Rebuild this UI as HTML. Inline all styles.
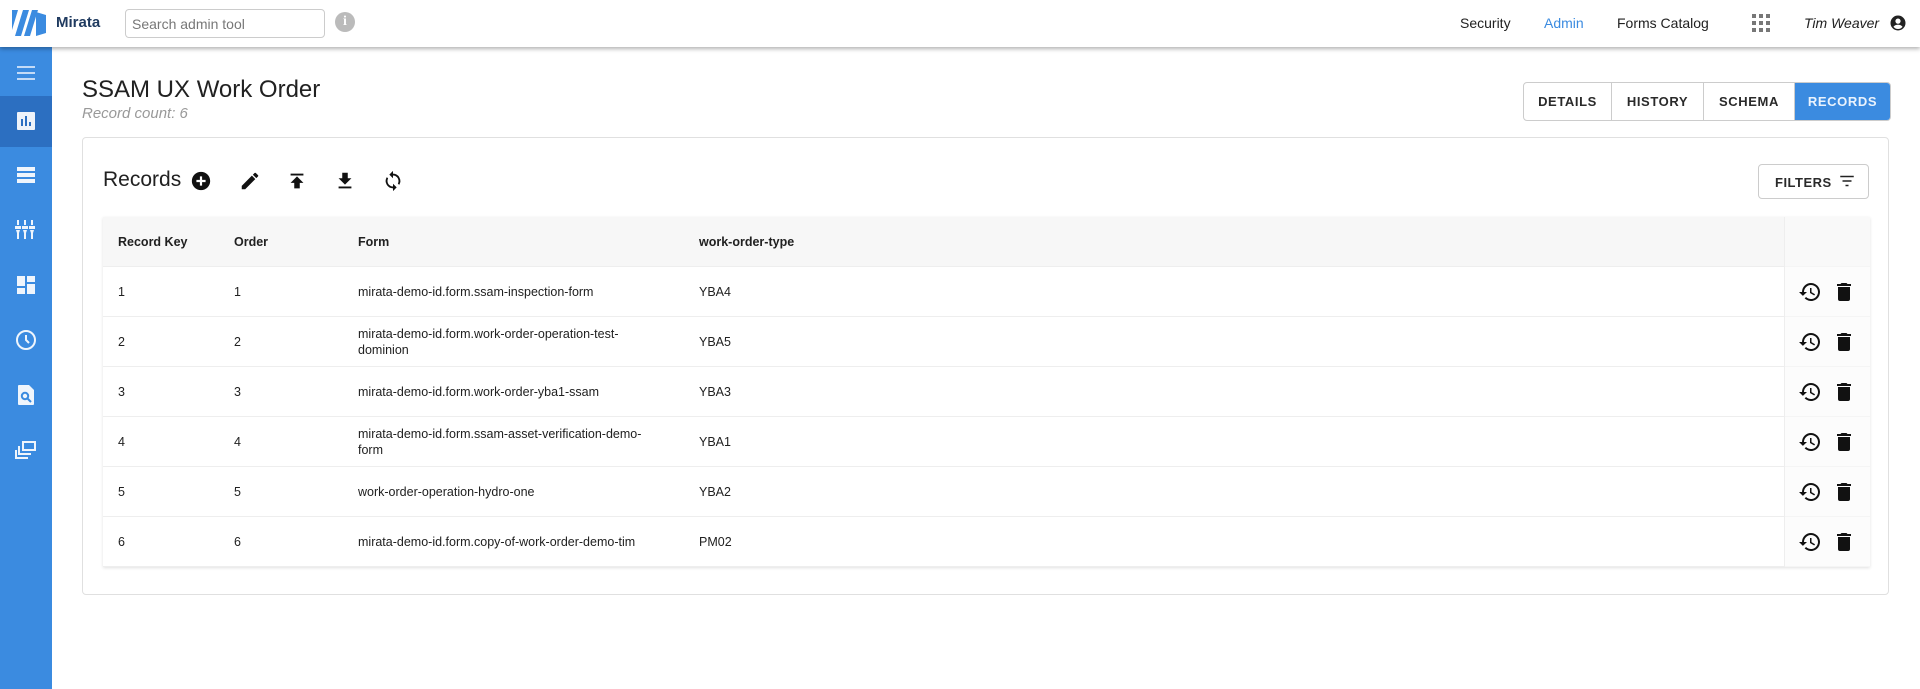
<!DOCTYPE html>
<html><head><meta charset="utf-8"><style>
*{box-sizing:border-box;margin:0;padding:0}
body{width:1920px;height:689px;overflow:hidden;background:#fff;font-family:"Liberation Sans",Arial,sans-serif;color:#212121;position:relative}
.hdr{position:absolute;left:0;top:0;width:1920px;height:47px;background:#fff;box-shadow:0 2px 4px rgba(0,0,0,.3);z-index:2}
.side{position:absolute;left:0;top:47px;width:52px;height:642px;background:#3b8be0}
.side .ic{position:absolute;left:14px;width:24px;height:24px;opacity:.92}
.abs{position:absolute}
.nav{position:absolute;top:15px;font-size:14px}
.tabs{position:absolute;left:1523px;top:82px;height:39px;display:flex;border:1px solid #ccc;border-radius:4px;overflow:hidden}
.tabs div{font-size:13px;font-weight:bold;letter-spacing:.6px;display:flex;align-items:center;justify-content:center;border-right:1px solid #ccc;color:#2a2a2a}
.card{position:absolute;left:82px;top:137px;width:1807px;height:458px;border:1px solid #e0e0e0;border-radius:4px}
.tbl{position:absolute;left:103px;top:217px;width:1767px;height:350px;box-shadow:0 1px 3px rgba(0,0,0,.12)}
.row{position:absolute;left:0;width:1767px;height:50px;border-bottom:1px solid #eee;font-size:12.5px}
.row span{position:absolute;top:50%;transform:translateY(-50%);line-height:16px}
.th{background:#f7f7f7;font-weight:bold;font-size:12.5px}
.act{position:absolute;left:1681px;top:0;width:86px;height:350px;border-left:1px solid #eee;background:rgba(250,250,250,.6)}
</style></head><body>
<div class="hdr">
<svg class="abs" style="left:10px;top:10px" width="42" height="26" viewBox="0 0 42 26"><path d="M0 0h8L2 20V0z M5 26 13 0h6l-8 26z M14 26 22 0h6l-8 26z M26 26V2l10 3v18z" fill="#3b8be0"/></svg>
<div class="abs" style="left:56px;top:14px;font-size:15px;font-weight:bold;color:#1f3a5f">Mirata</div>
<div class="abs" style="left:125px;top:9px;width:200px;height:29px;border:1px solid #ccc;border-radius:4px;font-size:14px;color:#777;padding:6px 6px">Search admin tool</div>
<div class="abs" style="left:335px;top:12px;width:20px;height:20px;border-radius:50%;background:#bbb;color:#fff;font-size:14px;font-weight:bold;text-align:center;line-height:20px;font-family:'Liberation Serif',serif">i</div>
<div class="nav" style="left:1460px">Security</div>
<div class="nav" style="left:1544px;color:#3b8be0">Admin</div>
<div class="nav" style="left:1617px">Forms Catalog</div>
<svg class="abs" style="left:1752px;top:14px" width="18" height="18" viewBox="0 0 18 18" fill="#777"><rect x="0" y="0" width="4" height="4"/><rect x="7" y="0" width="4" height="4"/><rect x="14" y="0" width="4" height="4"/><rect x="0" y="7" width="4" height="4"/><rect x="7" y="7" width="4" height="4"/><rect x="14" y="7" width="4" height="4"/><rect x="0" y="14" width="4" height="4"/><rect x="7" y="14" width="4" height="4"/><rect x="14" y="14" width="4" height="4"/></svg>
<div class="nav" style="left:1804px;font-style:italic">Tim Weaver</div>
<svg class="abs" style="left:1889px;top:14px" width="18" height="18" viewBox="0 0 24 24"><path fill="#222" d="M12 2a10 10 0 100 20 10 10 0 000-20zm0 4a3.5 3.5 0 110 7 3.5 3.5 0 010-7zm0 14a8 8 0 01-6-2.8c.8-1.8 3.6-2.8 6-2.8s5.2 1 6 2.8A8 8 0 0112 20z"/></svg>
</div>
<div class="side">
<svg class="ic" style="top:14px" viewBox="0 0 24 24"><path d="M3 6h18M3 12h18M3 18h18" stroke="#cfe2fa" stroke-width="2"/></svg>
<div class="abs" style="left:0;top:49px;width:52px;height:51px;background:#2c6fc1"></div>
<svg class="ic" style="top:62px" viewBox="0 0 24 24"><path fill="#fff" d="M4 3h16a1 1 0 011 1v16a1 1 0 01-1 1H4a1 1 0 01-1-1V4a1 1 0 011-1zm3 7v7h2v-7zm4-3v10h2V7zm4 6v4h2v-4z"/></svg>
<svg class="ic" style="top:116px" viewBox="0 0 24 24"><path fill="#fff" d="M3 4h18v4H3zm0 6h18v4H3zm0 6h18v4H3z"/></svg>
<svg class="ic" style="top:171px" viewBox="0 0 24 24"><path fill="#fff" d="M3 2h2v5H3zm7 0h2v5h-2zm7 0h2v5h-2zM1 8h6v3H1zm7 0h6v3H8zm7 0h6v3h-6zM2 12h4l-1 3v6H3v-6zm7 0h4l-1 3v6h-2v-6zm7 0h4l-1 3v6h-2v-6z"/></svg>
<svg class="ic" style="top:226px" viewBox="0 0 24 24"><path fill="#fff" d="M3 3h8v10H3zm10 0h8v6h-8zM3 15h8v6H3zm10-4h8v10h-8z"/></svg>
<svg class="ic" style="top:281px" viewBox="0 0 24 24"><circle cx="12" cy="12" r="9" fill="none" stroke="#fff" stroke-width="2"/><path d="M12 7v5l3 3" stroke="#fff" stroke-width="2" fill="none"/></svg>
<svg class="ic" style="top:336px" viewBox="0 0 24 24"><path fill="#fff" d="M5 2h10l5 5v14a1 1 0 01-1 1H5a1 1 0 01-1-1V3a1 1 0 011-1z"/><circle cx="11" cy="13" r="3.2" fill="none" stroke="#3b8be0" stroke-width="2"/><path d="M13.5 15.5 17 19" stroke="#3b8be0" stroke-width="2"/></svg>
<svg class="ic" style="top:391px" viewBox="0 0 24 24"><path d="M9 4h12v8H9z" fill="none" stroke="#fff" stroke-width="2"/><path d="M5 8v8h12M2 12v8h12" fill="none" stroke="#fff" stroke-width="2"/></svg>
</div>
<div class="abs" style="left:82px;top:76px;font-size:24px">SSAM UX Work Order</div>
<div class="abs" style="left:82px;top:105px;font-size:15px;font-style:italic;color:#999">Record count: 6</div>
<div class="tabs"><div style="width:88px">DETAILS</div><div style="width:92px">HISTORY</div><div style="width:91px">SCHEMA</div><div style="width:95px;background:#3b8be0;color:#eaf3fd;border:none">RECORDS</div></div>
<div class="card"></div>
<div class="abs" style="left:103px;top:168px;font-size:21px">Records</div>
<svg class="abs" style="left:190px;top:170px" width="22" height="22" viewBox="0 0 24 24"><circle cx="12" cy="12" r="10" fill="#111"/><path d="M12 7v10M7 12h10" stroke="#fff" stroke-width="2.4"/></svg>
<svg class="abs" style="left:239px;top:170px" width="22" height="22" viewBox="0 0 24 24"><path fill="#111" d="M3 17.25V21h3.75L17.8 9.94l-3.75-3.75zM20.7 7.04a1 1 0 000-1.41l-2.34-2.34a1 1 0 00-1.41 0l-1.83 1.83 3.75 3.75z"/></svg>
<svg class="abs" style="left:286px;top:170px" width="22" height="22" viewBox="0 0 24 24"><path fill="#111" d="M5 4h14v2H5zm0 10h4v6h6v-6h4l-7-7z"/></svg>
<svg class="abs" style="left:334px;top:170px" width="22" height="22" viewBox="0 0 24 24"><path fill="#111" d="M19 9h-4V3H9v6H5l7 7zM5 18v2h14v-2z"/></svg>
<svg class="abs" style="left:382px;top:170px" width="22" height="22" viewBox="0 0 24 24"><path fill="#111" d="M12 4V1L8 5l4 4V6c3.3 0 6 2.7 6 6 0 1-.25 2-.7 2.8l1.46 1.46A8 8 0 0012 4zm0 14c-3.3 0-6-2.7-6-6 0-1 .25-2 .7-2.8L5.24 7.74A8 8 0 0012 20v3l4-4-4-4z"/></svg>
<div class="abs" style="left:1758px;top:164px;width:111px;height:35px;border:1px solid #ccc;border-radius:4px;font-size:13px;font-weight:bold;padding:10px 0 0 16px;letter-spacing:.5px;color:#2a2a2a">FILTERS</div>
<svg class="abs" style="left:1838px;top:172px" width="18" height="18" viewBox="0 0 24 24"><path d="M3 6h18M6 12h12M10 18h4" stroke="#222" stroke-width="2"/></svg>
<div class="tbl">
<div class="row th" style="top:0"><span style="left:15px">Record Key</span><span style="left:131px">Order</span><span style="left:255px">Form</span><span style="left:596px">work-order-type</span></div>
<div class="row" style="top:50px"><span style="left:15px">1</span><span style="left:131px">1</span><span style="left:255px">mirata-demo-id.form.ssam-inspection-form</span><span style="left:596px">YBA4</span></div>
<div class="row" style="top:100px"><span style="left:15px">2</span><span style="left:131px">2</span><span style="left:255px">mirata-demo-id.form.work-order-operation-test-<br>dominion</span><span style="left:596px">YBA5</span></div>
<div class="row" style="top:150px"><span style="left:15px">3</span><span style="left:131px">3</span><span style="left:255px">mirata-demo-id.form.work-order-yba1-ssam</span><span style="left:596px">YBA3</span></div>
<div class="row" style="top:200px"><span style="left:15px">4</span><span style="left:131px">4</span><span style="left:255px">mirata-demo-id.form.ssam-asset-verification-demo-<br>form</span><span style="left:596px">YBA1</span></div>
<div class="row" style="top:250px"><span style="left:15px">5</span><span style="left:131px">5</span><span style="left:255px">work-order-operation-hydro-one</span><span style="left:596px">YBA2</span></div>
<div class="row" style="top:300px"><span style="left:15px">6</span><span style="left:131px">6</span><span style="left:255px">mirata-demo-id.form.copy-of-work-order-demo-tim</span><span style="left:596px">PM02</span></div>
<div class="act"></div>
</div>
<svg width="0" height="0" style="position:absolute"><defs>
<symbol id="hist" viewBox="0 0 24 24"><path fill="#111" d="M13 3a9 9 0 00-9 9H1l3.9 3.9L9 12H6a7 7 0 112.05 4.95l-1.42 1.42A9 9 0 1013 3zm-1 5v5l4.25 2.52.77-1.28-3.52-2.09V8z"/></symbol>
<symbol id="del" viewBox="0 0 24 24"><path fill="#111" d="M6 19a2 2 0 002 2h8a2 2 0 002-2V7H6zM19 4h-3.5l-1-1h-5l-1 1H5v2h14z"/></symbol></defs></svg>
<svg class="abs" style="left:1798px;top:280px" width="24" height="24"><use href="#hist"/></svg><svg class="abs" style="left:1832px;top:280px" width="24" height="24"><use href="#del"/></svg>
<svg class="abs" style="left:1798px;top:330px" width="24" height="24"><use href="#hist"/></svg><svg class="abs" style="left:1832px;top:330px" width="24" height="24"><use href="#del"/></svg>
<svg class="abs" style="left:1798px;top:380px" width="24" height="24"><use href="#hist"/></svg><svg class="abs" style="left:1832px;top:380px" width="24" height="24"><use href="#del"/></svg>
<svg class="abs" style="left:1798px;top:430px" width="24" height="24"><use href="#hist"/></svg><svg class="abs" style="left:1832px;top:430px" width="24" height="24"><use href="#del"/></svg>
<svg class="abs" style="left:1798px;top:480px" width="24" height="24"><use href="#hist"/></svg><svg class="abs" style="left:1832px;top:480px" width="24" height="24"><use href="#del"/></svg>
<svg class="abs" style="left:1798px;top:530px" width="24" height="24"><use href="#hist"/></svg><svg class="abs" style="left:1832px;top:530px" width="24" height="24"><use href="#del"/></svg>
</body></html>
